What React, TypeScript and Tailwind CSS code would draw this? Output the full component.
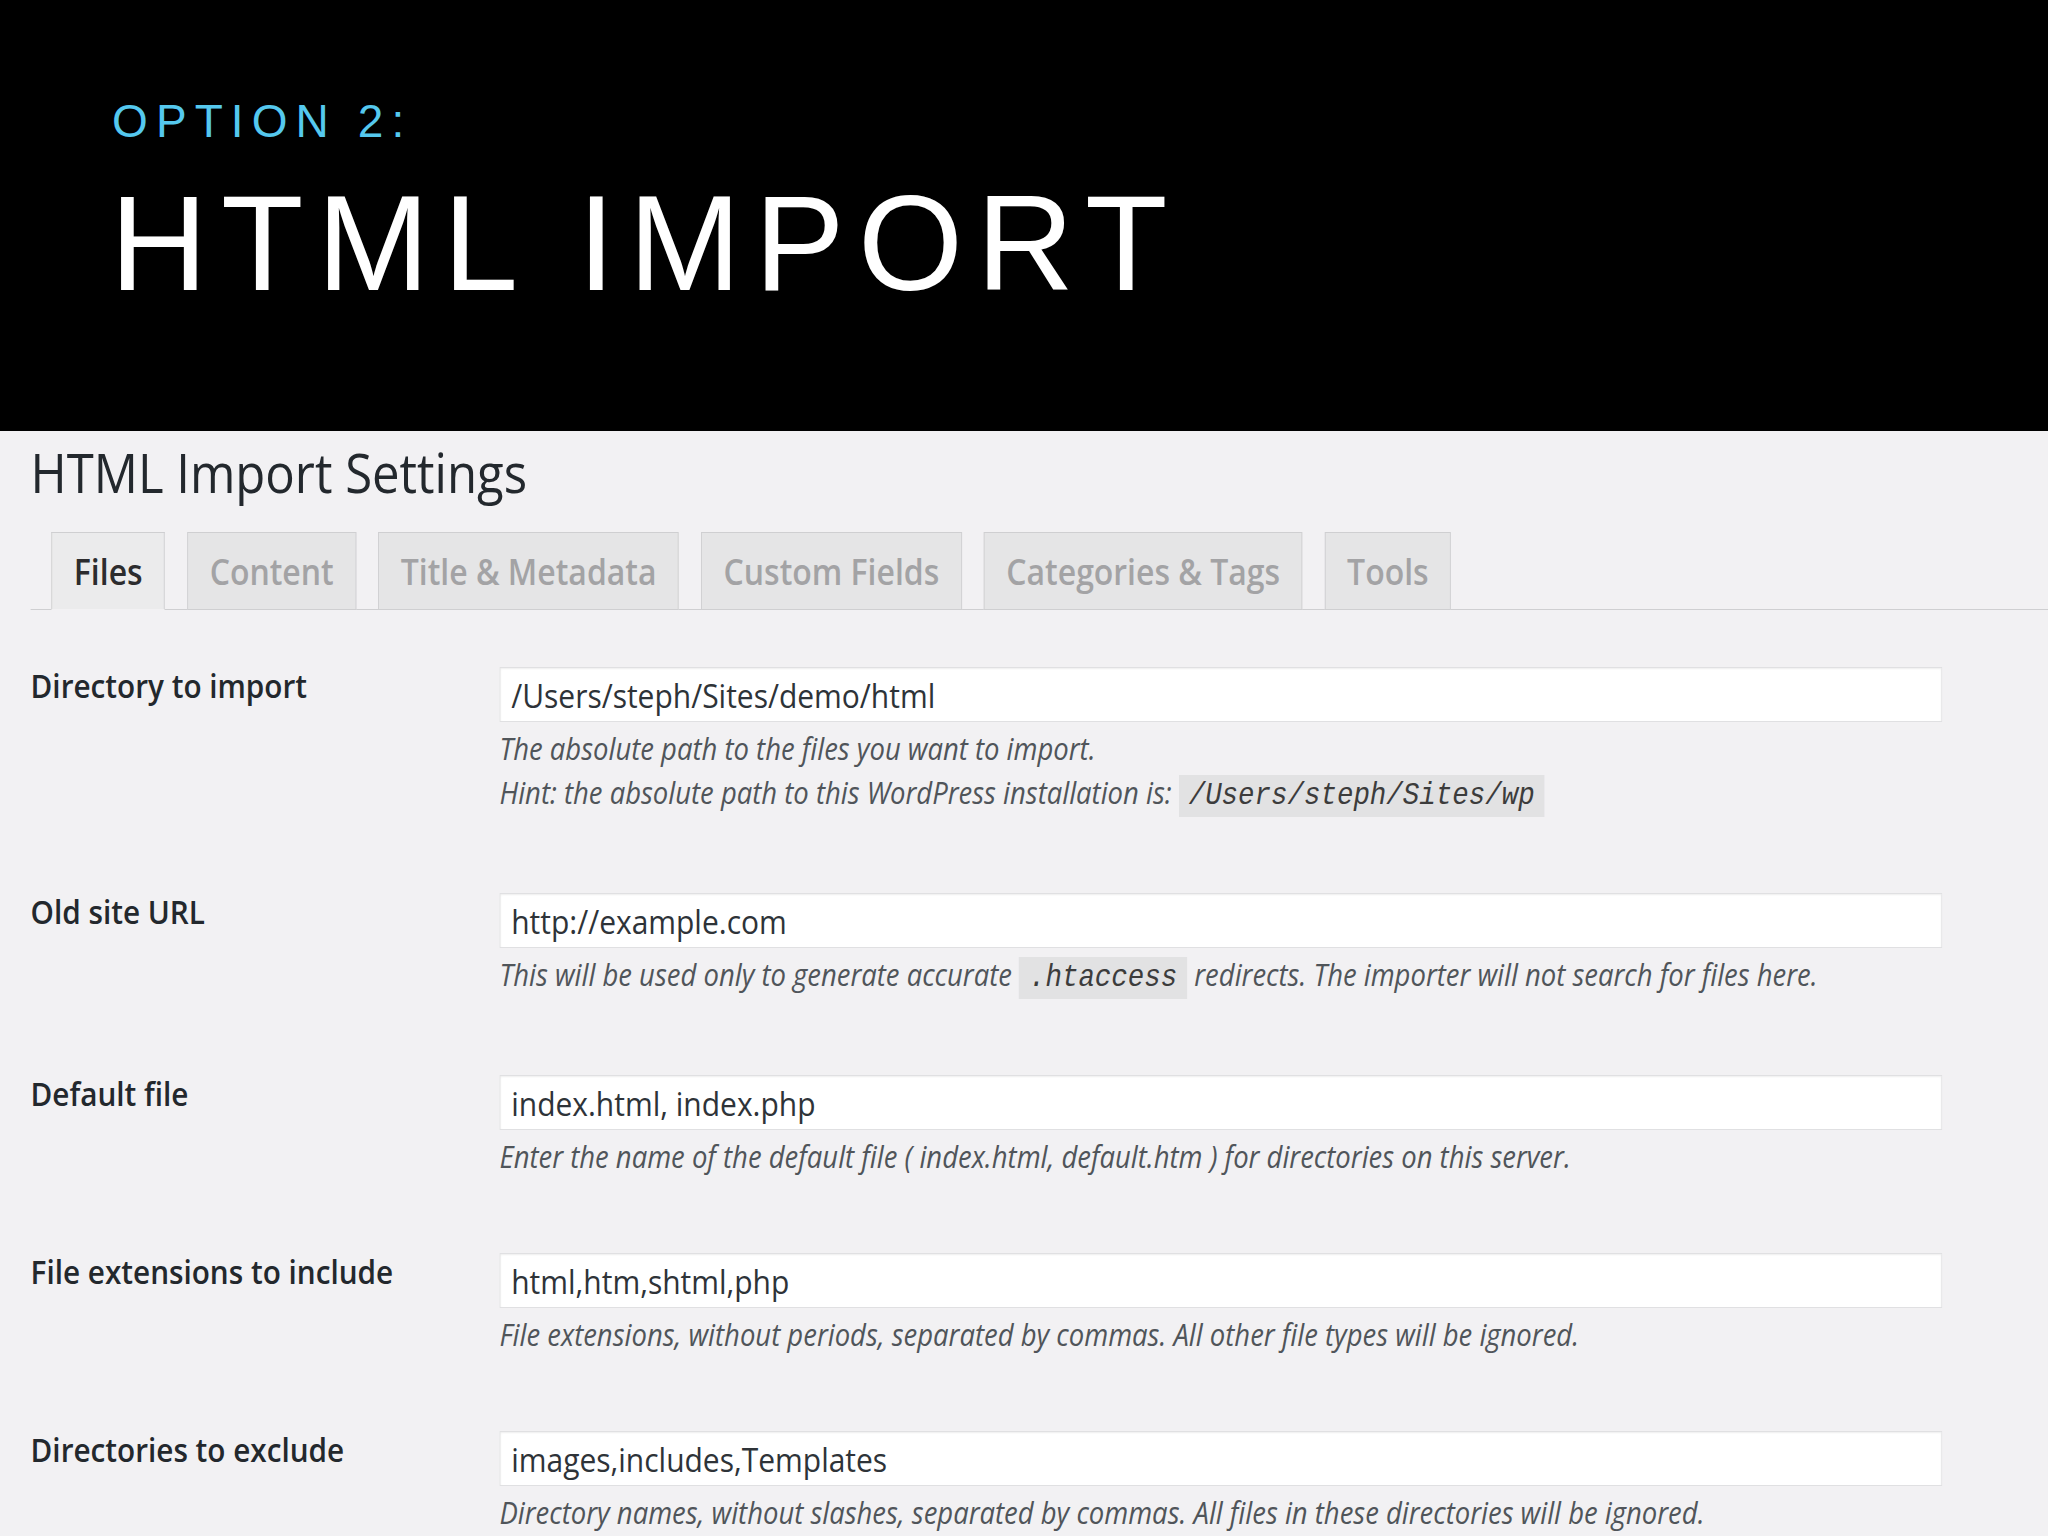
import React from 'react';

type Row = {
  label: string;
  value: string;
  desc: React.ReactNode[];
  pad: string;
};

const Code = ({ children }: { children: React.ReactNode }) => (
  <code className="bg-[#e2e2e3] px-[11px] py-[4px] font-['Liberation_Mono',monospace] text-[30.5px] leading-none text-[#3c3c3c]">
    {children}
  </code>
);

const rows: Row[] = [
  {
    label: 'Directory to import',
    value: '/Users/steph/Sites/demo/html',
    desc: [
      'The absolute path to the files you want to import.',
      <>
        Hint: the absolute path to this WordPress installation is: <Code>/Users/steph/Sites/wp</Code>
      </>,
    ],
    pad: 'pb-[79px]',
  },
  {
    label: 'Old site URL',
    value: 'http://example.com',
    desc: [
      <>
        This will be used only to generate accurate <Code>.htaccess</Code> redirects. The importer will not search for files here.
      </>,
    ],
    pad: 'pb-[79px]',
  },
  {
    label: 'Default file',
    value: 'index.html, index.php',
    desc: ['Enter the name of the default file ( index.html, default.htm ) for directories on this server.'],
    pad: 'pb-[75px]',
  },
  {
    label: 'File extensions to include',
    value: 'html,htm,shtml,php',
    desc: ['File extensions, without periods, separated by commas. All other file types will be ignored.'],
    pad: 'pb-[75px]',
  },
  {
    label: 'Directories to exclude',
    value: 'images,includes,Templates',
    desc: ['Directory names, without slashes, separated by commas. All files in these directories will be ignored.'],
    pad: 'pb-[75px]',
  },
];

const tabs = ['Files', 'Content', 'Title & Metadata', 'Custom Fields', 'Categories & Tags', 'Tools'];

export default function App() {
  return (
    <div className="h-[1536px] w-[2048px] overflow-hidden bg-[#f2f1f3]">
      <header className="h-[431px] bg-black pl-[110px] pt-[98px] font-['Liberation_Sans',Arial,sans-serif]">
        <div className="ml-[2px] text-[46px] leading-none tracking-[8.1px] text-[#55c8ee]">OPTION 2:</div>
        <h1 className="mt-[32px] text-[135px] leading-none tracking-[13.5px] text-white">HTML IMPORT</h1>
      </header>

      {/* the admin screenshot is squeezed horizontally, so the panel is laid out wider and scaled */}
      <main className="w-[2276px] origin-top-left scale-x-[0.9] pl-[34px] pt-[5px] font-['Open_Sans',sans-serif]">
        <h2 className="text-[54.5px] leading-[72px] text-[#23282d]">HTML Import Settings</h2>

        <nav className="mt-[24px] flex gap-[24.5px] border-b border-[#cfcfd1] pl-[23px]">
          {tabs.map((tab, i) => (
            <div
              key={tab}
              className={`-mb-px border border-[#cfcfd1] px-[24px] pb-[14px] pt-[14px] text-[35.5px] font-semibold leading-[48px] ${
                i === 0 ? 'border-b-[#f2f1f3] bg-[#ebebec] text-[#2c2c2e]' : 'bg-[#e5e5e6] text-[#a3a3a5]'
              }`}
            >
              {tab}
            </div>
          ))}
        </nav>

        <div className="mt-[57px]">
          {rows.map(row => (
            <div key={row.label} className={`grid grid-cols-[521px_1603px] ${row.pad}`}>
              <div className="text-[33px] font-semibold leading-[38px] text-[#23282d]">{row.label}</div>
              <div>
                <input
                  readOnly
                  value={row.value}
                  className="h-[55px] w-full border border-[#e0e0e2] bg-white px-[12px] text-[33.3px] text-[#2e3338] shadow-[inset_0_1px_2px_rgba(0,0,0,0.07)] outline-none"
                />
                <div className="mt-[4px] text-[30.5px] italic leading-[44px] text-[#50555a]">
                  {row.desc.map((line, i) => (
                    <p key={i}>{line}</p>
                  ))}
                </div>
              </div>
            </div>
          ))}
        </div>
      </main>
    </div>
  );
}
